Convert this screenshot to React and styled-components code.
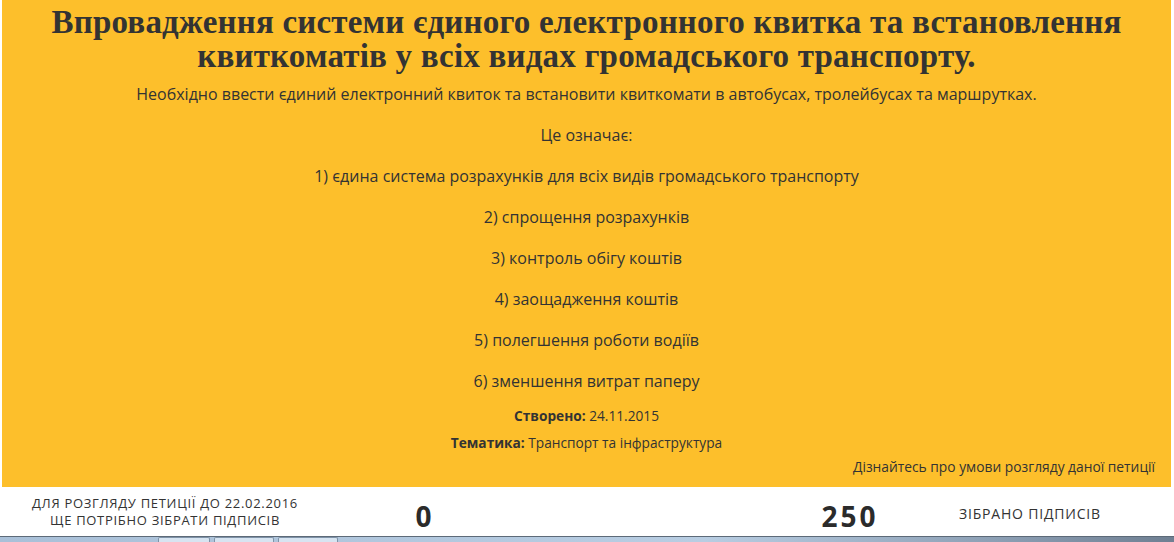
import React from 'react'
import styled, { createGlobalStyle } from 'styled-components'

const Global = createGlobalStyle`
  html, body {
    margin: 0;
    padding: 0;
    background: #fff;
  }
  body {
    width: 1174px;
    height: 542px;
    overflow: hidden;
    font-family: "Open Sans", "Noto Sans", sans-serif;
    color: #333;
  }
`

const Page = styled.div`
  display: flex;
  flex-direction: column;
  height: 542px;
`

const Panel = styled.section`
  background: #fdbf2b;
  margin: 0 3px 0 2px;
  padding: 5px 16px 10px;
  height: 487px;
  box-sizing: border-box;
  display: flex;
  flex-direction: column;
  align-items: center;
`

const Title = styled.h1`
  margin: 0;
  font-family: "Liberation Serif", "DejaVu Serif", serif;
  font-weight: 700;
  font-size: 33px;
  line-height: 34px;
  letter-spacing: 0.2px;
  text-align: center;
  color: #333;
`

const Text = styled.p`
  margin: 0;
  font-size: 16px;
  line-height: 20px;
  text-align: center;
  margin-top: ${p => p.$top || 21}px;
`

const Meta = styled.p`
  margin: 0;
  font-size: 13.7px;
  line-height: 18px;
  text-align: center;
  margin-top: ${p => p.$top}px;

  b {
    font-weight: 700;
  }
`

const MoreLink = styled.a`
  align-self: flex-end;
  margin-top: 6px;
  font-size: 13.8px;
  line-height: 18px;
  color: #333;
  text-decoration: none;
`

const Stats = styled.div`
  display: grid;
  grid-template-columns: 330px 190px 1fr 180px 180px 54px;
  align-items: center;
  height: 49px;
  background: #fff;
`

const Label = styled.div`
  font-size: ${p => p.$size || 13}px;
  line-height: 17px;
  letter-spacing: ${p => p.$spacing || 0.7}px;
  text-transform: uppercase;
  text-align: center;
  color: #333;
  padding-top: ${p => p.$pad || 0}px;
`

const Count = styled.div`
  font-size: 28px;
  font-weight: 700;
  letter-spacing: 3px;
  text-align: center;
  color: #2b2b2b;
  padding-top: 8px;
`

const Taskbar = styled.div`
  flex: 1;
  display: flex;
  gap: 4px;
  padding-left: 140px;
  border-top: 1px solid #5d6a78;
  background: linear-gradient(90deg, #a9c0d8 0%, #b8cde2 60%, #8c9fb4 85%, #6f7f92 100%);
`

const TaskTab = styled.div`
  width: ${p => p.$w}px;
  margin-left: ${p => p.$left || 0}px;
  border: 1px solid #7f93a8;
  border-bottom: none;
  background: #d7e4f1;
  border-radius: 2px 2px 0 0;
`

const items = [
  '1) єдина система розрахунків для всіх видів громадського транспорту',
  '2) спрощення розрахунків',
  '3) контроль обігу коштів',
  '4) заощадження коштів',
  '5) полегшення роботи водіїв',
  '6) зменшення витрат паперу',
]

export default function App() {
  return (
    <Page>
      <Global />
      <Panel>
        <Title>
          Впровадження системи єдиного електронного квитка та встановлення
          <br />
          квиткоматів у всіх видах громадського транспорту.
        </Title>
        <Text $top={11}>
          Необхідно ввести єдиний електронний квиток та встановити квиткомати в
          автобусах, тролейбусах та маршрутках.
        </Text>
        <Text>Це означає:</Text>
        {items.map((it, i) => (
          <Text key={i}>{it}</Text>
        ))}
        <Meta $top={16}>
          <b>Створено:</b> 24.11.2015
        </Meta>
        <Meta $top={9}>
          <b>Тематика:</b> Транспорт та інфраструктура
        </Meta>
        <MoreLink href="#">Дізнайтесь про умови розгляду даної петиції</MoreLink>
      </Panel>
      <Stats>
        <Label>
          Для розгляду петиції до 22.02.2016
          <br />
          ще потрібно зібрати підписів
        </Label>
        <Count>0</Count>
        <div />
        <Count>250</Count>
        <Label $size={14} $spacing={0.8} $pad={4}>Зібрано підписів</Label>
        <div />
      </Stats>
      <Taskbar>
        <TaskTab $w={50} $left={18} />
        <TaskTab $w={58} />
        <TaskTab $w={58} />
      </Taskbar>
    </Page>
  )
}
